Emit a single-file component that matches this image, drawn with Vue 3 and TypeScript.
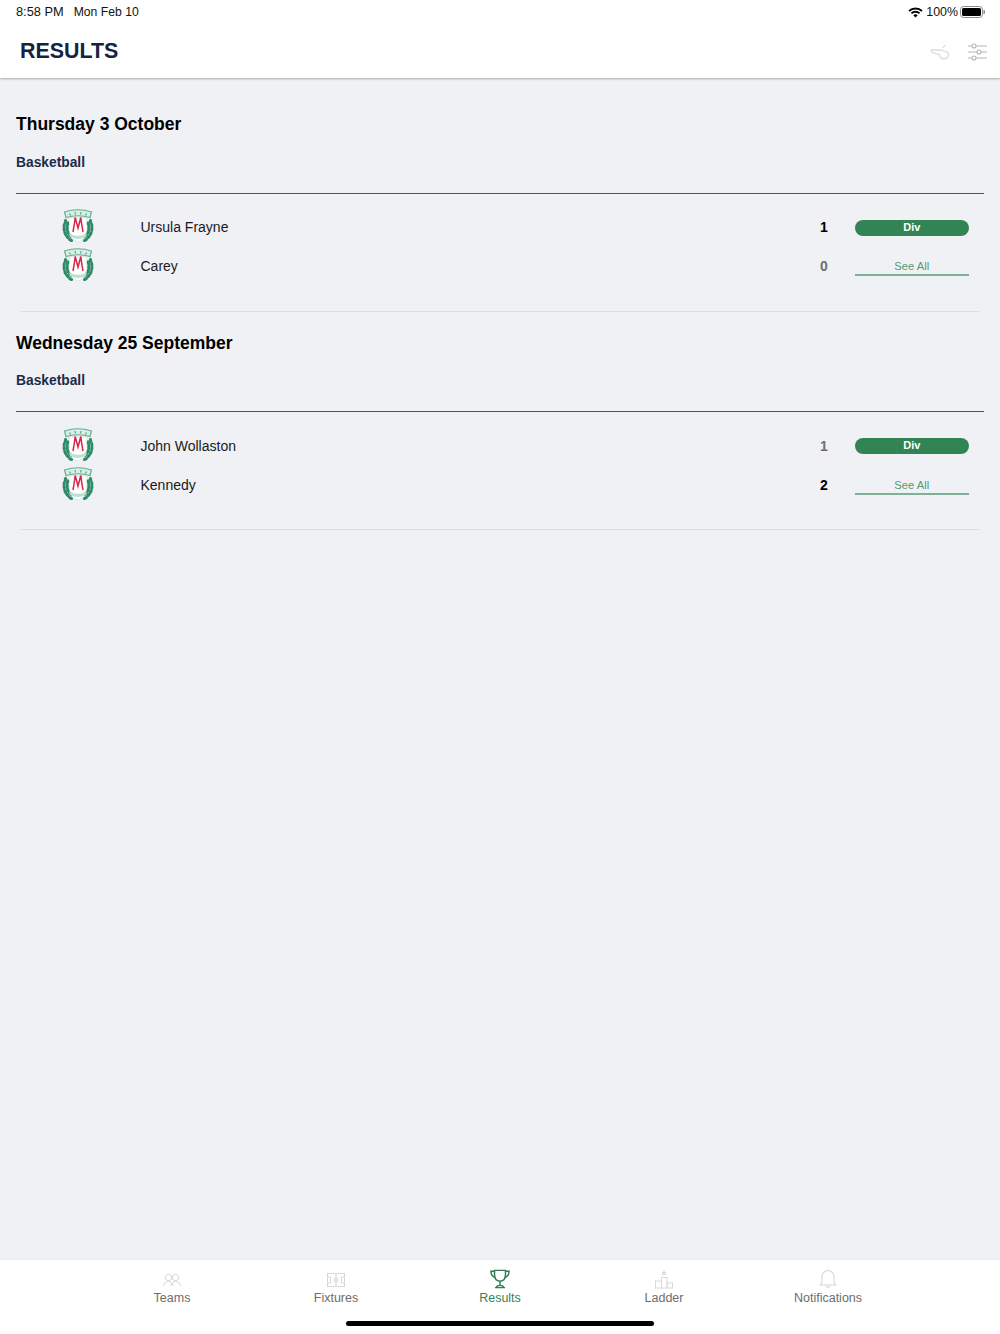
<script setup lang="ts">
interface Team { name: string; score: number; won: boolean }
interface Day { date: string; sport: string; teams: [Team, Team] }
const days: Day[] = [
  { date: 'Thursday 3 October', sport: 'Basketball', teams: [
    { name: 'Ursula Frayne', score: 1, won: true },
    { name: 'Carey', score: 0, won: false } ] },
  { date: 'Wednesday 25 September', sport: 'Basketball', teams: [
    { name: 'John Wollaston', score: 1, won: false },
    { name: 'Kennedy', score: 2, won: true } ] },
]
const tabs = ['Teams', 'Fixtures', 'Results', 'Ladder', 'Notifications']
const leaves = [
  { x: 4.4, y: 12.5, r: 14 }, { x: 3.2, y: 16.5, r: 4 }, { x: 3.2, y: 20.5, r: -8 },
  { x: 4.2, y: 24.5, r: -24 }, { x: 6.4, y: 28, r: -42 }, { x: 9.6, y: 31, r: -62 },
  { x: 6.6, y: 15, r: 10 }, { x: 6.2, y: 19, r: 0 }, { x: 6.8, y: 23, r: -18 }, { x: 9, y: 26.6, r: -38 },
]
</script>

<template>
  <div class="page">
    <header class="top">
      <div class="status">
        <span class="clock">8:58 PM</span>
        <span class="clock date">Mon Feb 10</span>
        <span class="spacer"></span>
        <svg class="wifi" width="15" height="11" viewBox="0 0 15 11">
          <path d="M1 4 A9.5 9.5 0 0 1 14 4" fill="none" stroke="#000" stroke-width="1.9"/>
          <path d="M3.4 6.4 A6 6 0 0 1 11.6 6.4" fill="none" stroke="#000" stroke-width="1.9"/>
          <path d="M5.3 8.3 A3.2 3.2 0 0 1 9.7 8.3 L7.5 10.6 Z" fill="#000"/>
        </svg>
        <span class="clock pct">100%</span>
        <svg width="25" height="12" viewBox="0 0 25 12">
          <rect x="0.5" y="0.5" width="22" height="11" rx="3" fill="none" stroke="#8a8a8a"/>
          <rect x="2" y="2" width="19" height="8" rx="1.6" fill="#000"/>
          <path d="M23.5 4 A2 2 0 0 1 23.5 8 Z" fill="#8a8a8a"/>
        </svg>
      </div>
      <div class="bar">
        <h1>RESULTS</h1>
        <div class="actions">
          <svg width="20" height="16" viewBox="0 0 20 16" fill="none" stroke="#dcdcdc" stroke-width="1.3">
            <path d="M1 6 H11 L18 8.5 A4.5 4.5 0 1 1 9.5 11 L6 9.5 L2 8.5 Z"/>
            <path d="M13 4 L15 1"/>
          </svg>
          <svg width="20" height="18" viewBox="0 0 20 18" fill="none" stroke="#b5b5b5" stroke-width="1.1">
            <path d="M0 3 H4 M8 3 H19 M0 9 H9 M13 9 H19 M0 15 H4 M8 15 H19"/>
            <circle cx="6" cy="3" r="2"/><circle cx="11" cy="9" r="2"/><circle cx="6" cy="15" r="2"/>
          </svg>
        </div>
      </div>
    </header>

    <main class="content">
      <section v-for="day in days" :key="day.date" class="day">
        <h2>{{ day.date }}</h2>
        <h3>{{ day.sport }}</h3>
        <div class="match">
          <div v-for="(team, i) in day.teams" :key="team.name" class="row">
            <svg class="crest" width="34" height="36" viewBox="0 0 34 36">
              <path d="M8 9 H26 V25 Q26 30 17 33 Q8 30 8 25 Z" fill="#fff" stroke="#cfe6dc" stroke-width="0.8"/>
              <path d="M3.5 3 Q17 -1.5 30.5 3 L29 8.5 Q17 5 5 8.5 Z" fill="#d9eee5" stroke="#62ae92" stroke-width="1.2"/>
              <path d="M8.5 4.5 L9.5 6.5 M14 3 L14.5 5.5 M20 3 L19.5 5.5 M25.5 4.5 L24.5 6.5" stroke="#4f9f82" stroke-width="1.1"/>
              <g fill="#2f8a68">
                <ellipse v-for="(l, k) in leaves" :key="k" :cx="l.x" :cy="l.y" rx="1.6" ry="2.7" :transform="`rotate(${l.r} ${l.x} ${l.y})`"/>
                <ellipse v-for="(l, k) in leaves" :key="'r' + k" :cx="34 - l.x" :cy="l.y" rx="1.6" ry="2.7" :transform="`rotate(${-l.r} ${34 - l.x} ${l.y})`"/>
              </g>
              <path d="M8 24.5 Q17 29 26 24.5 L25 28 Q17 32 9 28 Z" fill="#bfe0d2"/>
              <path d="M12 23 Q13.5 15 14.2 8.5 L17 19 L19.8 8.5 Q20.5 15 22 23" fill="none" stroke="#d9254a" stroke-width="1.5"/>
            </svg>
            <span class="name">{{ team.name }}</span>
            <span class="score" :class="{ lost: !team.won }">{{ team.score }}</span>
            <span v-if="i === 0" class="pill">Div</span>
            <span v-else class="see">See All</span>
          </div>
        </div>
        <div class="sep"></div>
      </section>
    </main>

    <nav class="tabs">
      <div v-for="tab in tabs" :key="tab" class="tab" :class="{ active: tab === 'Results' }">
        <svg v-if="tab === 'Teams'" width="20" height="18" viewBox="0 0 20 18" fill="none" stroke="#d8d8d8" stroke-width="1">
          <circle cx="6.5" cy="6.5" r="3.2"/><circle cx="13.5" cy="6.5" r="3.2"/>
          <path d="M1 15 Q2.5 11 6.5 10 Q10 11 11.5 15 M8.5 15 Q10 11 13.5 10 Q17.5 11 19 15"/>
        </svg>
        <svg v-else-if="tab === 'Fixtures'" width="20" height="18" viewBox="0 0 20 18" fill="none" stroke="#d8d8d8" stroke-width="1">
          <rect x="1.5" y="2.5" width="17" height="13"/>
          <path d="M10 2.5 V15.5 M1.5 6 H4.5 V12 H1.5 M18.5 6 H15.5 V12 H18.5"/>
          <circle cx="10" cy="9" r="2"/>
        </svg>
        <svg v-else-if="tab === 'Results'" width="20" height="20" viewBox="0 0 22 22" fill="none" stroke="#2f7d55" stroke-width="1.6">
          <path d="M5 1.5 H17 V7 Q17 13 11 13.5 Q5 13 5 7 Z"/>
          <path d="M5 2.5 H1 Q1 8 6 9.5 M17 2.5 H21 Q21 8 16 9.5"/>
          <path d="M11 13.5 V18 M7 20.5 Q7 18 11 18 Q15 18 15 20.5 Z M5.5 20.5 H16.5"/>
        </svg>
        <svg v-else-if="tab === 'Ladder'" width="20" height="20" viewBox="0 0 20 20" fill="none" stroke="#d8d8d8" stroke-width="1">
          <path d="M10 1 L11 3.2 L12.8 3.4 L11.4 4.6 L11.8 6.4 L10 5.4 L8.2 6.4 L8.6 4.6 L7.2 3.4 L9 3.2 Z" fill="#d8d8d8" stroke="none"/>
          <rect x="1.5" y="12" width="6" height="7"/><rect x="7.5" y="8.5" width="5.5" height="10.5"/><rect x="13" y="14" width="5.5" height="5"/>
        </svg>
        <svg v-else width="18" height="20" viewBox="0 0 18 20" fill="none" stroke="#d8d8d8" stroke-width="1.1">
          <path d="M3 14 V7.5 A6 6 0 0 1 15 7.5 V14 L17 16 H1 Z"/>
          <path d="M7 17 A2.2 2.2 0 0 0 11 17"/>
        </svg>
        <span class="label">{{ tab }}</span>
      </div>
      <div class="home"></div>
    </nav>
  </div>
</template>

<style>
html, body { margin: 0; background: #f0f1f5; }
</style>

<style scoped>
* { box-sizing: border-box; }
.page {
  width: 1000px; height: 1334px; display: flex; flex-direction: column;
  background: #f0f1f5; font-family: "Liberation Sans", Arial, sans-serif; overflow: hidden;
}
.top { background: #fff; height: 78px; box-shadow: 0 1px 2px rgba(0,0,0,.3); position: relative; flex: none; }
.status { height: 24px; padding: 0 15px 0 16px; display: flex; align-items: center; gap: 10px; font-size: 12.8px; color: #111; }
.clock { line-height: 24px; }
.date { font-size: 12.2px; }
.spacer { flex: 1; }
.wifi { margin-right: -7px; }
.pct { margin-right: -8px; font-size: 12.4px; }
.bar { height: 55px; padding: 0 12px 0 20px; display: flex; align-items: center; justify-content: space-between; }
h1 { margin: 0; font-size: 21.4px; font-weight: 700; color: #14243f; }
.actions { display: flex; gap: 18px; align-items: center; }
.content { flex: 1; padding: 0 16px; }
.day { height: 218.5px; padding-top: 34px; }
h2 { margin: 0; height: 24px; line-height: 24px; font-size: 17.5px; font-weight: 700; color: #000; }
h3 { margin: 16.5px 0 0; height: 20px; line-height: 20px; font-size: 13.8px; font-weight: 700; color: #1b2c4a; }
.match { margin-top: 20px; border-top: 1px solid #4a5368; padding-top: 14px; }
.row { height: 39px; display: flex; align-items: center; }
.crest { margin-left: 45px; flex: none; }
.name { margin-left: 45.5px; flex: 1; font-size: 14px; color: #1a1a1a; }
.score { width: 14px; text-align: center; font-size: 14px; font-weight: 700; color: #000; margin-right: 23.5px; }
.score.lost { color: #6f6f6f; }
.pill, .see { width: 114.5px; margin-right: 15px; text-align: center; font-size: 11px; }
.pill { height: 16px; line-height: 15px; margin-top: 1px; border-radius: 8px; background: #328455; color: #fff; font-weight: 700; }
.see { height: 18px; line-height: 16px; margin-top: 2px; border-bottom: 2px solid #7fb197; color: #4f9a74; font-size: 11.2px; }
.sep { height: 1px; background: #dcdde1; margin: 25px 5px 0; }
.tabs { height: 75px; flex: none; background: #fff; border-top: 1px solid #eaebee; position: relative; display: flex; justify-content: center; padding-top: 8px; }
.tab { width: 164px; display: flex; flex-direction: column; align-items: center; height: 37px; justify-content: flex-end; gap: 2px; }
.label { font-size: 12.5px; line-height: 14px; color: #6d6d6d; }
.active .label { color: #328455; }
.home { position: absolute; left: 346px; bottom: 8px; width: 308px; height: 5px; border-radius: 3px; background: #000; }
</style>
